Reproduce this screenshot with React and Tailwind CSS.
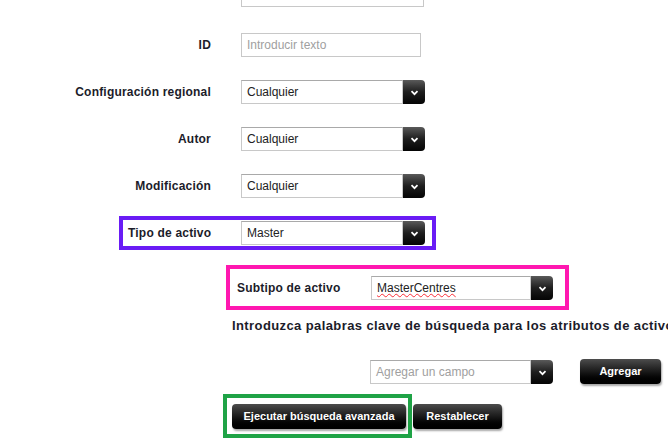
import React from 'react';

const font = "font-['Liberation_Sans','DejaVu_Sans',sans-serif]";

const Arrow = () => (
    <div className="flex h-full w-[22px] items-center justify-center rounded-r-[4px] bg-gradient-to-b from-[#5a5a5a] via-[#1e1e1e] to-[#050505]">
        <svg width="9" height="6" viewBox="0 0 9 6" className="mt-[2px]">
            <path d="M1.5 1.2 L4.5 4.2 L7.5 1.2" fill="none" stroke="#fff" strokeWidth="1.7" />
        </svg>
    </div>
);

const Select = ({ value, width = 'w-[184px]', muted, spell }) => (
    <div className={`flex h-[24px] ${width} items-stretch`}>
        <div className="flex flex-1 items-center border border-[#c8c8c8] border-t-[#a9a9a9] bg-white px-[5px] text-[12px]">
            <span className={`${muted ? 'text-[#a0a0a0]' : 'text-[#222]'} ${spell ? 'underline decoration-wavy decoration-red-500 decoration-1' : ''}`}>
                {value}
            </span>
        </div>
        <Arrow />
    </div>
);

const DarkButton = ({ children, className = '' }) => (
    <button className={`flex h-[25px] items-center justify-center rounded-[4px] bg-gradient-to-b from-[#4d4d4d] via-[#1a1a1a] to-[#000] text-[11px] font-bold text-white shadow-[1px_2px_2px_rgba(0,0,0,0.35)] ${className}`}>
        {children}
    </button>
);

const Row = ({ label, children, className = '' }) => (
    <div className={`flex items-center ${className}`}>
        <div className="w-[211px] text-right text-[12px] font-bold tracking-[0.2px] text-[#1c1c2a]">{label}</div>
        <div className="ml-[30px]">{children}</div>
    </div>
);

export default function App() {
    return (
        <div className={`h-[448px] w-[668px] overflow-hidden bg-white ${font}`}>
            {/* first input, cut off at the top */}
            <div className="ml-[241px] -mt-[17px] h-[24px] w-[183px] border border-[#c8c8c8] bg-white" />

            <Row label="ID" className="mt-[26px]">
                <div className="flex h-[24px] w-[180px] items-center border border-[#c8c8c8] px-[5px] text-[12px] text-[#a0a0a0]">
                    Introducir texto
                </div>
            </Row>

            <Row label="Configuración regional" className="mt-[23px]">
                <Select value="Cualquier" />
            </Row>
            <Row label="Autor" className="mt-[23px]">
                <Select value="Cualquier" />
            </Row>
            <Row label="Modificación" className="mt-[23px]">
                <Select value="Cualquier" />
            </Row>

            {/* Tipo de activo */}
            <div className="ml-[119px] mt-[18px] flex w-[317px] items-center border-4 border-[#6a1cf5] py-[1px] pl-[5px]">
                <div className="w-[113px] text-[12px] font-bold tracking-[0.2px] text-[#1c1c2a]">Tipo de activo</div>
                <Select value="Master" />
            </div>

            {/* Subtipo de activo */}
            <div className="ml-[226px] mt-[15px] flex w-[343px] items-center border-4 border-[#ff18b0] pb-[6px] pl-[7px] pt-[7px]">
                <div className="w-[134px] text-[12px] font-bold tracking-[0.2px] text-[#1c1c2a]">Subtipo de activo</div>
                <Select value="MasterCentres" width="w-[182px]" spell />
            </div>

            <div className="ml-[232px] mt-[8px] whitespace-nowrap text-[13px] font-bold leading-[16px] tracking-[0.4px] text-[#1c1c2a]">
                Introduzca palabras clave de búsqueda para los atributos de activo
            </div>

            <div className="ml-[370px] mt-[25px] flex items-center">
                <Select value="Agregar un campo" width="w-[183px]" muted />
                <DarkButton className="ml-[27px] w-[81px]">Agregar</DarkButton>
            </div>

            <div className="ml-[223px] mt-[10px] flex items-center">
                <div className="border-4 border-[#1fa346] pb-[5px] pl-[5px] pr-[2px] pt-[6px]">
                    <DarkButton className="w-[174px]">Ejecutar búsqueda avanzada</DarkButton>
                </div>
                <DarkButton className="ml-[1px] w-[89px]">Restablecer</DarkButton>
            </div>
        </div>
    );
}
